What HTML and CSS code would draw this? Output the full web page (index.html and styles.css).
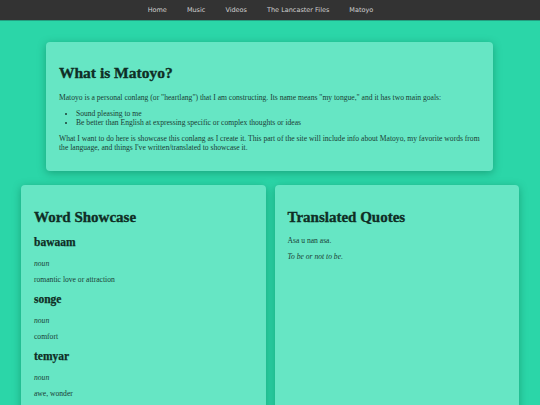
FILE: index.html
```html
<!DOCTYPE html>
<html>
<head>
<meta charset="utf-8">
<link rel="stylesheet" href="styles.css">
</head>
<body>
<nav class="topnav">
  <ul class="navlist">
    <li><a href="#">Home</a></li>
    <li><a href="#">Music</a></li>
    <li><a href="#">Videos</a></li>
    <li><a href="#">The Lancaster Files</a></li>
    <li><a href="#">Matoyo</a></li>
  </ul>
</nav>
<main class="page">
  <section class="card intro">
    <h1 class="title">What is Matoyo?</h1>
    <p class="text">Matoyo is a personal conlang (or "heartlang") that I am constructing. Its name means "my tongue," and it has two main goals:</p>
    <ul class="goals">
      <li>Sound pleasing to me</li>
      <li>Be better than English at expressing specific or complex thoughts or ideas</li>
    </ul>
    <p class="text">What I want to do here is showcase this conlang as I create it. This part of the site will include info about Matoyo, my favorite words from the language, and things I've written/translated to showcase it.</p>
  </section>
  <div class="columns">
    <section class="card column">
      <h2 class="title">Word Showcase</h2>
      <div class="word">
        <h3 class="word-name">bawaam</h3>
        <p class="pos">noun</p>
        <p class="def">romantic love or attraction</p>
      </div>
      <div class="word">
        <h3 class="word-name">songe</h3>
        <p class="pos">noun</p>
        <p class="def">comfort</p>
      </div>
      <div class="word">
        <h3 class="word-name">temyar</h3>
        <p class="pos">noun</p>
        <p class="def">awe, wonder</p>
      </div>
    </section>
    <section class="card column">
      <h2 class="title">Translated Quotes</h2>
      <p class="quote">Asa u nan asa.</p>
      <p class="quote translation">To be or not to be.</p>
    </section>
  </div>
</main>
</body>
</html>
```
FILE: styles.css
```css
* { box-sizing: border-box; }
html, body { margin: 0; padding: 0; }
body {
  background: #2bd6a8;
  font-family: "Liberation Serif", "Times New Roman", serif;
  color: #1a3d34;
  font-size: 7.6px;
  line-height: 9px;
  height: 405px;
  overflow: hidden;
}
.topnav {
  background: #333333;
  height: 21px;
  border-bottom: 1px solid #239e80;
}
.navlist {
  list-style: none;
  margin: 0;
  padding: 0 19px 0 0;
  display: flex;
  justify-content: center;
  height: 20px;
  align-items: center;
}
.navlist a {
  display: block;
  padding: 0 10px;
  color: #d0d0d0;
  text-decoration: none;
  font-family: "DejaVu Sans", Verdana, sans-serif;
  font-size: 6.5px;
}
.page {
  padding: 21px 21px 0 21px;
}
.card {
  background: #66e6c4;
  border-radius: 4px;
  box-shadow: 0 2px 9px rgba(0, 90, 60, 0.4);
  padding: 13px;
}
.intro {
  margin: 0 26px 0 25px;
  height: 129px;
  padding-top: 22px;
}
.title {
  margin: 0;
  font-weight: bold;
  color: #0f2e25;
  -webkit-text-stroke: 0.35px #0f2e25;
}
h1.title {
  font-size: 15.5px;
  line-height: 18px;
  margin-bottom: 11px;
}
.text { margin: 0 0 7px; }
.goals {
  margin: 0 0 7px;
  padding-left: 17px;
}
.columns {
  display: grid;
  grid-template-columns: 1fr 1fr;
  gap: 9px;
  margin-top: 14px;
}
.column {
  height: 240px;
  padding-top: 23px;
}
h2.title {
  font-size: 15px;
  line-height: 18px;
  margin-bottom: 10px;
}
.word-name {
  margin: 0 0 10px;
  font-size: 11.5px;
  line-height: 13px;
  color: #0f2e25;
  -webkit-text-stroke: 0.25px #0f2e25;
}
.word { margin-bottom: 9px; }
.pos { margin: 0 0 7px; font-style: italic; }
.def { margin: 0; }
.quote { margin: 0 0 7px; }
.translation { font-style: italic; }
```
